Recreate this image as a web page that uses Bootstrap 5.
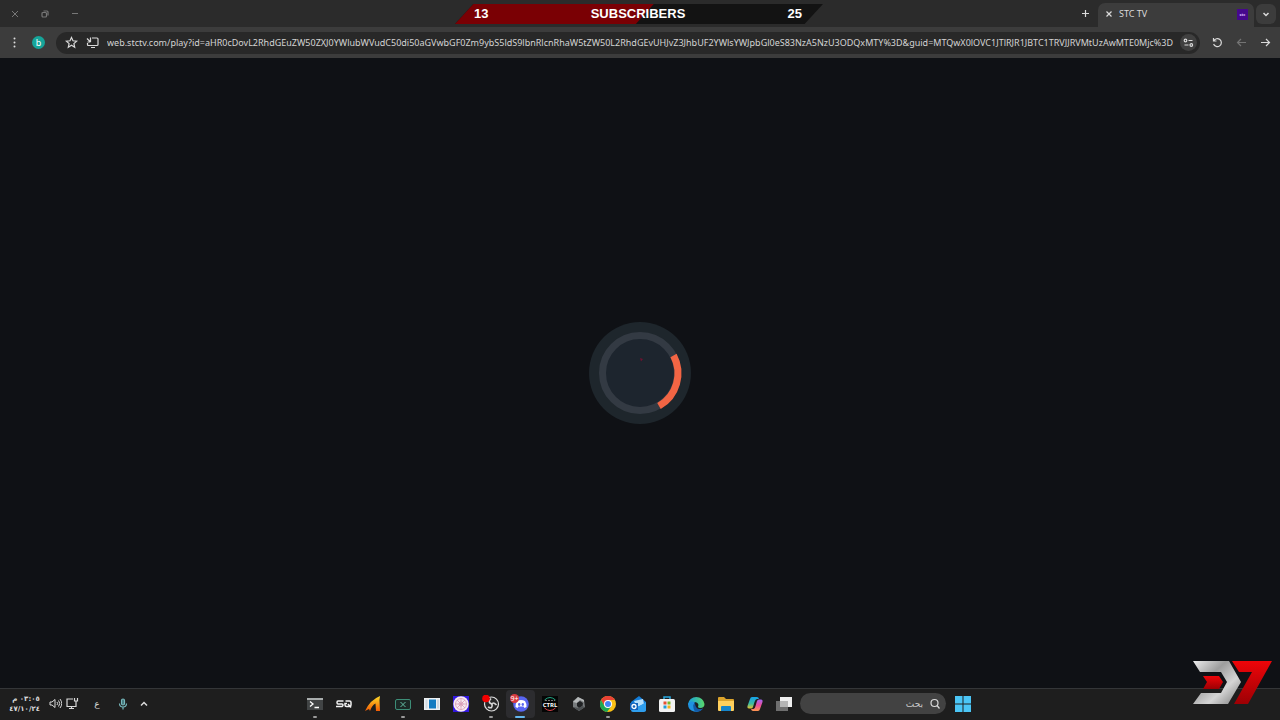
<!DOCTYPE html>
<html lang="en">
<head>
<meta charset="utf-8">
<meta name="viewport" content="width=device-width, initial-scale=1">
<title>STC TV</title>
<link href="https://cdn.jsdelivr.net/npm/bootstrap@5.3.0/dist/css/bootstrap.min.css" rel="stylesheet">
<style>
body{background:#0f1115;color:#dadada;font-family:"Noto Sans","Open Sans",sans-serif;font-size:9px;line-height:12px}
button{background:none;border:0;padding:0;color:inherit;line-height:1;display:flex;align-items:center;justify-content:center}
svg{display:block;flex:none}
.line-icon{fill:none;stroke:currentColor;stroke-width:1.2}
.tab-strip{height:27px;background:#2b2b2b}
.window-buttons{color:#777;padding-left:8px;gap:16px}
.window-buttons button{width:14px;height:27px}
.new-tab{width:14px}
.page-tab{background:#3c3c3c;width:156px;height:24px;border-radius:7px 7px 0 0;padding:0 6px 2px 7px;gap:6px;margin-left:6px}
.tab-menu{width:20px;height:20px;background:#3c3c3c;border-radius:6px;margin:0 4px 0 2px}
.site-icon{width:11px;height:11px;background:#46088c;color:#d9b9ff;font-size:4px;line-height:11px;text-align:center;font-weight:700}
.toolbar{height:31px;background:#3c3c3c;padding:0 8px;gap:11px}
.toolbar .unavailable{color:#747474}
.avatar{width:13px;height:13px;border-radius:50%;background:#16a59a;color:#fff}
.address{height:22px;background:#282828;border-radius:11px;padding:0 3px 0 9px}
.address input{background:none;border:0;padding:0;outline:0;color:#d4d4d4;font:9px/14px "Noto Sans","Open Sans",sans-serif;min-width:0}
.page-action{margin-right:8px}
.site-settings{width:17px;height:17px;border-radius:50%;background:#404040;margin-left:4px}
.banner{top:4px;width:368px;height:20px;color:#fff;font:bold 13px/20px "Liberation Sans",sans-serif;background:#131313;clip-path:polygon(5% 0,100% 0,95% 100%,0 100%)}
.banner-fill{inset:0 46% 0 0;background:#7a0004;clip-path:polygon(0 0,100% 0,91% 100%,0 100%)}
.banner-text{padding:0 21px 0 19px}
.banner-wrap{padding-right:2px}
.taskbar{height:32px;background:#1e1e1e;border-top:1px solid #343638;padding-bottom:2px}
.tray{left:0;padding-left:12px}
.clock{width:28px;font:bold 7px/10px "DejaVu Sans",sans-serif;text-align:center;white-space:nowrap}
.volume{margin-left:9px}
.network{margin-left:4px}
.language{margin-left:12px;width:12px;font:9px/12px "DejaVu Sans",sans-serif}
.microphone{margin-left:14px}
.hidden-icons{margin-left:10px}
.apps{width:499px}
.apps button{flex:1;height:28px;position:relative}
.apps .running::after{content:"";position:absolute;bottom:0;width:4px;height:2px;border-radius:1px;background:#9a9a9a}
.apps .active-app{background:#2c2c2f;border-radius:4px}
.apps .active-app::after{width:10px;background:#63b8f0}
.find{width:146px;height:21px;background:#424242;border-radius:11px;padding:0 6px;gap:5px;margin-left:1px}
.find input{background:none;border:0;outline:0;padding:0;min-width:0;color:#c9c9c9;font:9px/14px "DejaVu Sans",sans-serif}
.find input::placeholder{color:#c9c9c9;opacity:1}
.start{width:34px;height:28px}
.watermark{right:8px;bottom:14px;pointer-events:none}
</style>
</head>
<body>
<div class="d-flex flex-column vh-100 position-relative overflow-hidden">
  <header>
    <div class="tab-strip d-flex justify-content-between">
      <div class="window-buttons d-flex">
        <button aria-label="Close"><svg class="line-icon" width="8" height="8"><path d="M1 1l6 6M7 1L1 7" stroke-width="1"/></svg></button>
        <button aria-label="Restore"><svg class="line-icon" width="8" height="8"><rect x="1" y="2.500" width="4.500" height="4.500" rx="1"/><path d="M2.500 1h3.500q1 0 1 1v3.500"/></svg></button>
        <button aria-label="Minimize"><svg class="line-icon" width="8" height="8"><path d="M1 3.500h6" stroke-width="1"/></svg></button>
      </div>
      <div class="d-flex align-items-center">
        <button class="new-tab" aria-label="New tab"><svg class="line-icon" width="9" height="9"><path d="M4.500 1v7M1 4.500h7"/></svg></button>
        <div class="page-tab d-flex align-items-center align-self-end">
          <button aria-label="Close tab"><svg class="line-icon" width="8" height="8"><path d="M1.500 1.500l5 5M6.500 1.500l-5 5"/></svg></button>
          <span class="flex-grow-1">STC TV</span>
          <span class="site-icon">stc</span>
        </div>
        <button class="tab-menu" aria-label="Search tabs"><svg class="line-icon" width="8" height="8"><path d="M1.500 3L4 5.500 6.500 3" stroke-width="1.500"/></svg></button>
      </div>
    </div>
    <div class="toolbar d-flex align-items-center">
      <button aria-label="Menu"><svg width="13" height="13" fill="#ddd"><circle cx="6.500" cy="2.500" r="1"/><circle cx="6.500" cy="6.500" r="1"/><circle cx="6.500" cy="10.500" r="1"/></svg></button>
      <button class="avatar" aria-label="Profile">b</button>
      <div class="address d-flex align-items-center flex-grow-1">
        <button class="page-action" aria-label="Bookmark"><svg class="line-icon" width="13" height="13"><path d="M6.500 1.500l1.500 3.300 3.600.4-2.700 2.400.8 3.600-3.200-1.900-3.200 1.900.8-3.600-2.700-2.400 3.600-.4z"/></svg></button>
        <button class="page-action" aria-label="Install app"><svg class="line-icon" width="13" height="13"><path d="M6 2h5q1 0 1 1v5.500q0 1-1 1H2.500q-1 0-1-1V7M5 11.500h4M4.500 1.500v4.500M1.500 6h3M1 2.500l3.500 3.500"/></svg></button>
        <input class="flex-grow-1" aria-label="Address" value="web.stctv.com/play?id=aHR0cDovL2RhdGEuZW50ZXJ0YWlubWVudC50di50aGVwbGF0Zm9ybS5ldS9lbnRlcnRhaW5tZW50L2RhdGEvUHJvZ3JhbUF2YWlsYWJpbGl0eS83NzA5NzU3ODQxMTY%3D&amp;guid=MTQwX0lOVC1JTlRJR1JBTC1TRVJJRVMtUzAwMTE0Mjc%3D">
        <button class="site-settings" aria-label="Site settings"><svg class="line-icon" width="11" height="11"><circle cx="2.500" cy="3.500" r="1.300"/><path d="M5.500 3.500H9.500M1.500 8H5.500"/><circle cx="8.300" cy="8" r="1.300"/></svg></button>
      </div>
      <button aria-label="Reload"><svg class="line-icon" width="13" height="13"><path d="M2.500 2v3h3M2.700 5A4 4 0 1 1 2.600 8"/></svg></button>
      <button class="unavailable" aria-label="Forward"><svg class="line-icon" width="13" height="13"><path d="M11 6.500H2.500M6 3L2.500 6.500 6 10"/></svg></button>
      <button aria-label="Back"><svg class="line-icon" width="13" height="13"><path d="M2 6.500h8.500M7 3l3.500 3.500L7 10"/></svg></button>
    </div>
  </header>

  <div class="banner-wrap position-absolute start-50 translate-middle-x">
    <div class="banner position-relative">
      <div class="banner-fill position-absolute"></div>
      <div class="banner-text position-relative d-flex justify-content-between"><span>13</span><span>SUBSCRIBERS</span><span>25</span></div>
    </div>
  </div>

  <main class="flex-grow-1 d-flex align-items-center justify-content-center">
    <svg width="102" height="102" viewBox="-51 -51 102 102" role="img" aria-label="Loading">
      <circle r="51" fill="#1e262c"/><circle r="37.500" fill="#1d252e" stroke="#333a43" stroke-width="7"/>
      <path d="M33.500-17.500A37.700 37.700 0 0 1 19 33" fill="none" stroke="#f26544" stroke-width="7"/>
      <path d="M0-15l3 1-2 2.500z" fill="#6d1230"/>
    </svg>
  </main>

  <footer class="taskbar d-flex align-items-center justify-content-center position-relative">
    <div class="tray position-absolute d-flex align-items-center">
      <div class="clock" dir="rtl">٠٣:٠٥ م<br>٤٧/١٠/٢٤</div>
      <button class="volume" aria-label="Volume"><svg class="line-icon" width="13" height="13"><path d="M1 5h2l3-2.500v8L3 8H1zM8 5q1.200 1.500 0 3M9.500 3.500q2.500 3 0 6M11 2q3.500 4.500 0 9" stroke-width="1"/></svg></button>
      <button class="network" aria-label="Network"><svg class="line-icon" width="13" height="13"><path d="M7 2H1v7.500h9V7M3 11.500h5M5.500 9.500v2M8.500 1v3h3V1M10 4v3"/></svg></button>
      <button class="language" aria-label="Language">ع</button>
      <button class="microphone" aria-label="Microphone"><svg class="line-icon" width="12" height="12" color="#78b9bd"><rect x="4.500" y="1" width="3" height="6" rx="1.500" fill="#45777b"/><path d="M2.500 5.500q0 3.500 3.500 3.500t3.500-3.500M6 9v2.500"/></svg></button>
      <button class="hidden-icons" aria-label="Hidden icons"><svg class="line-icon" width="10" height="10"><path d="M2 6.500l3-3 3 3" stroke-width="1.500"/></svg></button>
    </div>
    <nav class="apps d-flex" aria-label="Applications">
      <button class="running" aria-label="Terminal"><svg width="16" height="16"><path d="M0 2h16v12H0z" fill="#414445"/><path d="M0 2h16v2H0z" fill="#a9adad"/><path d="M3 5.500l3 2.500-3 2.500M7.500 11.500H12" fill="none" stroke="#fff" stroke-width="1.300"/></svg></button>
      <button aria-label="SQ"><svg width="16" height="16" fill="none" stroke="#f2f2f2" stroke-width="1.500"><path d="M7.500 5H2Q1 5 1 6.500T2 8H6Q7 8 7 9T6 10.500H0M9.500 5h4q1.500 0 1.500 1.300v2.700q0 1.500-1.500 1.500h-3q-1.500 0-1.500-1.500V7.500h2M12 8l3 3.500"/></svg></button>
      <button aria-label="Launcher"><svg width="16" height="16"><defs><linearGradient id="flame" x2="0" y2="1"><stop stop-color="#ffdc28"/><stop offset="1" stop-color="#f25b05"/></linearGradient></defs><path d="M0 15Q5 4 15 0L14.500 4 15 15H11L10.500 7.500Q7 9 5 15L4 13z" fill="url(#flame)"/></svg></button>
      <button class="running" aria-label="Remote desktop"><svg width="16" height="16" fill="none" stroke="#3d8d77"><rect x=".5" y="3.500" width="15" height="10" rx="1.500" fill="#1c2926"/><path d="M5.500 6l5 5M10.500 6l-5 5" stroke="#63bca3"/></svg></button>
      <button aria-label="Document viewer"><svg width="16" height="16"><path d="M0 2h16v12H0z" fill="#edf1f3"/><path d="M5 3.500h7v9H5z" fill="#147cc1"/><path d="M1.500 3.500h2v9h-2M13 3.500h2v9h-2" fill="#cfd8df"/></svg></button>
      <button aria-label="Wheel app"><svg width="16" height="16"><path d="M0 0h16v16H0z" fill="#3217dd"/><circle cx="8" cy="8" r="7.700" fill="#f7e9ef"/><g fill="none" stroke="#d695b0" stroke-width=".7"><circle cx="8" cy="8" r="5.500"/><circle cx="8" cy="8" r="2"/><path d="M8 2v12M2 8h12M4 4l8 8M12 4l-8 8"/></g></svg></button>
      <button class="running" aria-label="OBS Studio"><svg width="18" height="18"><circle cx="9.500" cy="9" r="7" fill="#272727" stroke="#ddd" stroke-width="1.200"/><path d="M9 3.500Q5 7.500 10 9M14.500 10Q10.500 6 9.500 10M6 12Q11 14.500 10 9" fill="none" stroke="#d5d5d5" stroke-width="1.700"/><circle cx="4" cy="3.500" r="3.800" fill="#f20000"/></svg></button>
      <button class="running active-app" aria-label="Discord, 9+ notifications"><svg width="22" height="20"><circle cx="12" cy="10" r="7.800" fill="#5865f2"/><path d="M8 7q4-2 8 0 2 3 1.500 6l-2 1-1-1.500h-5l-1 1.500-2-1Q6.500 9.500 8 7z" fill="#fff"/><ellipse cx="10.200" cy="10.500" rx="1.200" ry="1.400" fill="#5865f2"/><ellipse cx="13.800" cy="10.500" rx="1.200" ry="1.400" fill="#5865f2"/><circle cx="5.500" cy="4.500" r="4.500" fill="#d83a42"/><text x="5.500" y="7" font-size="7" fill="#fff" text-anchor="middle">9+</text></svg></button>
      <button aria-label="CTRL"><svg width="16" height="16"><path d="M0 0h16v16H0z" fill="#050505"/><path d="M2.500 4Q8-1 13.500 4" fill="none" stroke="#21a784"/><path d="M2.500 12Q8 17 13.500 12" fill="none" stroke="#d94148"/><text x="8" y="10.500" text-anchor="middle" font-size="6" font-weight="700" fill="#fff">CTRL</text><path d="M3 4.500h10" stroke="#777" stroke-dasharray="2 1"/></svg></button>
      <button aria-label="Game tool"><svg width="16" height="16"><path d="M7 1l6 3 1 7-6 4-6-4V5z" fill="#777b7d"/><path d="M7 1L2 6l4 1 3-3 4 2V4z" fill="#b5b8b9"/><path d="M6 7l3-2 3 2-.5 3L8 12l-2-2z" fill="#202224"/><path d="M2 11l6 4 6-4-3-1-3 2z" fill="#4c5052"/></svg></button>
      <button class="running" aria-label="Chrome"><svg width="16" height="16"><circle cx="8" cy="8" r="8" fill="#fbc116"/><path d="M1 4A8 8 0 0 1 15 4H8L4.500 10z" fill="#e94235"/><path d="M1 4A8 8 0 0 0 7 16L11.500 10H4.500z" fill="#1da854"/><circle cx="8" cy="8" r="4" fill="#fff"/><circle cx="8" cy="8" r="3" fill="#4285f4"/></svg></button>
      <button aria-label="Outlook"><svg width="16" height="16"><path d="M1 6l8-6 7 6v9H2z" fill="#137dd8"/><path d="M4 5l9-2 1 5-7 3z" fill="#b5dffc"/><path d="M1 7l7 4 8-5v8q0 2-2 2H3q-2 0-2-2z" fill="#2f9eed"/><path d="M0 7h8v7H0z" fill="#1262ba"/><circle cx="4" cy="10.500" r="2" fill="none" stroke="#fff" stroke-width="1.300"/></svg></button>
      <button aria-label="Microsoft Store"><svg width="16" height="16"><path d="M5 4V1h6v3" fill="none" stroke="#28a8df" stroke-width="1.500"/><rect y="3" width="16" height="13" rx="1.500" fill="#f2f2f2"/><path d="M4.500 5.500h3v3h-3z" fill="#e75133"/><path d="M8.500 5.500h3v3h-3z" fill="#78b928"/><path d="M4.500 9.500h3v3h-3z" fill="#219ed8"/><path d="M8.500 9.500h3v3h-3z" fill="#f3b51c"/></svg></button>
      <button aria-label="Edge"><svg width="17" height="16"><defs><linearGradient id="wave"><stop stop-color="#169de0"/><stop offset="1" stop-color="#59d86a"/></linearGradient></defs><path d="M0 8A8.300 8 0 0 1 16.500 8Q16.500 12 12 12 9 12 10.500 9 10 6 6 6 2 6 0 9z" fill="url(#wave)"/><path d="M0 8Q3 4 7 6.500 4 10 8 13q3 2 7-.5Q11 17 6 15.500 0 14 0 8z" fill="#2093e0"/><path d="M7 6.500Q3.500 10 7 15.700q5 .8 8-3.200Q7 15 7 6.500z" fill="#1259a5"/></svg></button>
      <button aria-label="File Explorer"><svg width="16" height="16"><path d="M0 2q0-1 1-1h5l2 2h7q1 0 1 1v10H0z" fill="#dca42c"/><path d="M0 5h16v9q0 1-1 1H1q-1 0-1-1z" fill="#ffd05d"/><path d="M4 10h8q1 0 1 1v4H3v-4q0-1 1-1z" fill="#1685ca"/></svg></button>
      <button aria-label="Copilot"><svg width="16" height="16"><defs><linearGradient id="cool" x2="0" y2="1"><stop stop-color="#14a1ec"/><stop offset=".6" stop-color="#3ebd9d"/><stop offset="1" stop-color="#efc429"/></linearGradient><linearGradient id="warm" x2="0" y2="1"><stop stop-color="#a266f3"/><stop offset=".5" stop-color="#ec4d9b"/><stop offset="1" stop-color="#ff974e"/></linearGradient></defs><path d="M5 1h5q1.500 0 2 2H10Q8.500 3 7.500 6L6 11q-.5 1.500-2 1.500H2Q0 12.500.5 10L3 3q.5-2 2-2z" fill="url(#cool)"/><path d="M11 15H6q-1.500 0-2-2h2.500Q8 13 8.500 10l1.500-5q.5-1.500 2-1.500H14q2 0 1.500 2.500L13 13q-.5 2-2 2z" fill="url(#warm)"/></svg></button>
      <button aria-label="Task view"><svg width="16" height="16"><path d="M4 1h12v10H4z" fill="#eeeeee"/><path d="M0 5h12v10H0z" fill="#777" fill-opacity=".9"/><path d="M4 5h8v6H4z" fill="#b5b5b5"/></svg></button>
    </nav>
    <div class="find d-flex align-items-center" dir="rtl">
      <svg class="line-icon" width="12" height="12"><circle cx="6.500" cy="5" r="3.500"/><path d="M9 7.500l2.500 3"/></svg>
      <input class="flex-grow-1" type="search" aria-label="بحث" placeholder="بحث">
    </div>
    <button class="start" aria-label="Start"><svg width="16" height="16" fill="#4bc5f5"><path d="M0 0h7.500v7.500H0zM8.500 0H16v7.500H8.500zM0 8.500h7.500V16H0zM8.500 8.500H16V16H8.500z"/></svg></button>
  </footer>

  <svg class="watermark position-absolute" width="80" height="46" role="img" aria-label="D7">
    <defs><linearGradient id="steel" x2="1" y2="1"><stop stop-color="#eee"/><stop offset=".35" stop-color="#9d9d9d"/><stop offset=".65" stop-color="#d5d5d5"/><stop offset="1" stop-color="#777"/></linearGradient><linearGradient id="crimson" x2="0" y2="1"><stop stop-color="#ef0509"/><stop offset="1" stop-color="#9c0004"/></linearGradient></defs>
    <path d="M1 1H37L49 22 36 44H1L9 33H29L35 22 29 12H8z" fill="url(#steel)"/>
    <path d="M11 16H27L31 22 27 29H11L15 22z" fill="url(#crimson)"/>
    <path d="M40 1H80L56 44H42L60 12H47z" fill="url(#crimson)"/>
  </svg>
</div>
<script src="https://cdn.jsdelivr.net/npm/bootstrap@5.3.0/dist/js/bootstrap.bundle.min.js"></script>
</body>
</html>
